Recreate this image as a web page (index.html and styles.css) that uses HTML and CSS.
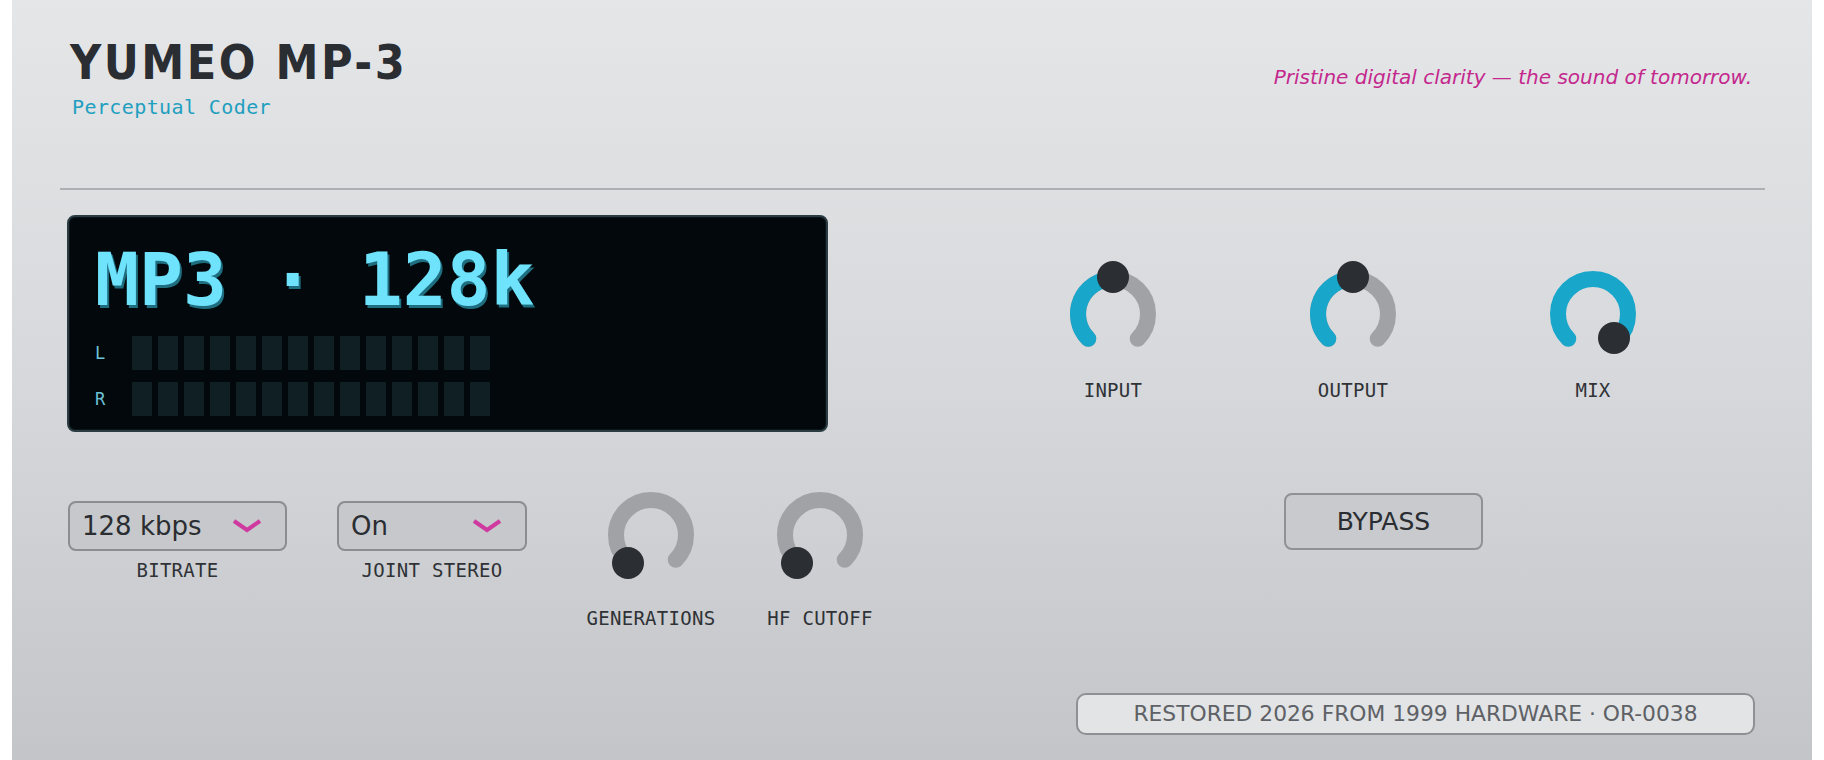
FILE: index.html
```html
<!DOCTYPE html>
<html lang="en">
<head>
    <meta charset="UTF-8">
    <meta name="viewport" content="width=device-width, initial-scale=1.0">
    <title>Yumeo MP-3</title>
    <link rel="stylesheet" href="styles.css">
</head>
<body>
    <div class="panel">
        <header class="header">
            <div class="brand">
                <h1>YUMEO MP-3</h1>
                <p class="subtitle">Perceptual Coder</p>
            </div>
            <p class="tagline">Pristine digital clarity — the sound of tomorrow.</p>
        </header>
        <div class="rule"></div>

        <div class="deck">
            <!-- left side: codec display and encoder settings -->
            <div class="left">
                <div class="display">
                    <div class="readout">MP3 · 128k</div>
                    <div class="meter">
                        <span class="ch">L</span>
                        <div class="segs">
                            <i></i><i></i><i></i><i></i><i></i><i></i><i></i><i></i><i></i><i></i><i></i><i></i><i></i><i></i>
                        </div>
                    </div>
                    <div class="meter">
                        <span class="ch">R</span>
                        <div class="segs">
                            <i></i><i></i><i></i><i></i><i></i><i></i><i></i><i></i><i></i><i></i><i></i><i></i><i></i><i></i>
                        </div>
                    </div>
                </div>

                <div class="controls">
                    <div class="field bitrate">
                        <div class="select">
                            <span>128 kbps</span>
                            <svg class="chev" viewBox="0 0 30 14"><path d="M2 2 L15 11 L28 2"/></svg>
                        </div>
                        <div class="label">BITRATE</div>
                    </div>
                    <div class="field stereo">
                        <div class="select">
                            <span>On</span>
                            <svg class="chev" viewBox="0 0 30 14"><path d="M2 2 L15 11 L28 2"/></svg>
                        </div>
                        <div class="label">JOINT STEREO</div>
                    </div>
                    <div class="knob small gen">
                        <svg viewBox="0 0 100 100">
                            <path class="track" d="M25.25 74.75 A35 35 0 1 1 74.75 74.75"/>
                            <circle class="dot" cx="27" cy="78" r="16"/>
                        </svg>
                        <div class="label">GENERATIONS</div>
                    </div>
                    <div class="knob small hf">
                        <svg viewBox="0 0 100 100">
                            <path class="track" d="M25.25 74.75 A35 35 0 1 1 74.75 74.75"/>
                            <circle class="dot" cx="27" cy="78" r="16"/>
                        </svg>
                        <div class="label">HF CUTOFF</div>
                    </div>
                </div>
            </div>

            <!-- right side: gain staging, bypass, badge -->
            <div class="right">
                <div class="knob-row">
                    <div class="knob">
                        <svg viewBox="0 0 100 100">
                            <path class="track" d="M25.25 74.75 A35 35 0 1 1 74.75 74.75"/>
                            <path class="value" d="M25.25 74.75 A35 35 0 0 1 50 15"/>
                            <circle class="dot" cx="50" cy="13" r="16"/>
                        </svg>
                        <div class="label">INPUT</div>
                    </div>
                    <div class="knob">
                        <svg viewBox="0 0 100 100">
                            <path class="track" d="M25.25 74.75 A35 35 0 1 1 74.75 74.75"/>
                            <path class="value" d="M25.25 74.75 A35 35 0 0 1 50 15"/>
                            <circle class="dot" cx="50" cy="13" r="16"/>
                        </svg>
                        <div class="label">OUTPUT</div>
                    </div>
                    <div class="knob">
                        <svg viewBox="0 0 100 100">
                            <path class="value" d="M25.25 74.75 A35 35 0 1 1 74.75 74.75"/>
                            <circle class="dot" cx="71" cy="74" r="16"/>
                        </svg>
                        <div class="label">MIX</div>
                    </div>
                </div>
                <button class="bypass">BYPASS</button>
                <div class="badge">RESTORED 2026 FROM 1999 HARDWARE · OR-0038</div>
            </div>
        </div>
    </div>
</body>
</html>
```

FILE: styles.css
```css
body { margin: 0; background: #fff; font-family: "DejaVu Sans", sans-serif; }
.panel { margin: 0 12px; min-height: 760px; box-sizing: border-box; padding: 38px 47px 0 48px; background: linear-gradient(to bottom, #e5e6e8 0%, #d6d8db 50%, #c3c5c8 100%); overflow: hidden; }

/* header */
.header { display: flex; justify-content: space-between; align-items: flex-start; padding: 0 13px 0 10px; }
.header h1 { margin: 0; font-family: "DejaVu Sans Condensed", "DejaVu Sans", sans-serif; font-stretch: condensed; font-size: 48px; line-height: 48px; font-weight: bold; letter-spacing: 2.5px; color: #2a2d31; }
.subtitle { margin: 11px 0 0 2px; font-family: "DejaVu Sans Mono", monospace; font-size: 20px; line-height: 20px; letter-spacing: 0.4px; color: #1f9fbf; }
.tagline { margin: 29px 0 0; font-size: 20px; line-height: 20px; font-style: italic; color: #c4288d; }
.rule { height: 2px; background: #adafb2; margin-top: 71px; }

.deck { display: grid; grid-template-columns: 761px 1fr; margin-top: 25px; padding-left: 7px; }

/* codec display */
.display { height: 217px; box-sizing: border-box; border: 2px solid #2a3c42; border-radius: 8px; background: #02080b; padding: 26px 24px 0 26px; box-shadow: inset 0 0 0 1px #0b1519; }
.readout { font-family: "DejaVu Sans Mono", monospace; font-weight: bold; font-size: 73px; line-height: 73px; color: #6fe2fc; text-shadow: 2px 3px 0 #1f6e80; white-space: pre; }
.meter { display: flex; align-items: center; height: 34px; margin-top: 12px; }
.readout + .meter { margin-top: 20px; }
.ch { width: 37px; font-family: "DejaVu Sans Mono", monospace; font-size: 17px; color: #6cc2d8; }
.segs { display: flex; gap: 6px; height: 34px; }
.segs i { width: 20px; height: 34px; background: #0f1f24; }

/* encoder settings */
.controls { display: flex; align-items: flex-start; margin-top: 69px; padding-left: 1px; }
.controls > * { flex-shrink: 0; }
.field { display: flex; flex-direction: column; align-items: stretch; }
.bitrate { width: 219px; }
.stereo { width: 190px; margin-left: 50px; }
.select { height: 50px; box-sizing: border-box; border: 2px solid #8b8d90; border-radius: 8px; background: #c6c8cb; display: flex; align-items: center; justify-content: space-between; padding: 0 23px 0 12px; font-size: 26px; color: #2a2d31; }
.chev { width: 30px; height: 14px; fill: none; stroke: #cf3aa0; stroke-width: 4; }
.label { font-family: "DejaVu Sans Mono", monospace; font-size: 19px; line-height: 22px; letter-spacing: 0.3px; color: #2f3236; text-align: center; }
.field .label { margin-top: 8px; }

/* knobs */
.knob { display: flex; flex-direction: column; align-items: center; width: 240px; }
.knob svg { width: 100px; height: 100px; overflow: visible; }
.knob .track, .knob .value { fill: none; stroke-width: 16; stroke-linecap: round; }
.track { stroke: #a0a2a5; }
.value { stroke: #18a6ca; }
.dot { fill: #2b2e32; }
.knob .label { margin-top: 15px; }
.knob.small { width: 130px; margin-top: -16px; }
.knob.small .label { margin-top: 22px; }
.gen { margin-left: 59px; }
.hf { margin-left: 39px; }

.right { display: flex; flex-direction: column; align-items: flex-start; }
.knob-row { display: flex; margin-top: 49px; padding-left: 165px; }
.bypass { margin: 92px 0 0 456px; width: 199px; height: 57px; box-sizing: border-box; border: 2px solid #8f9194; border-radius: 8px; background: #c8cacd; font-family: inherit; font-size: 25px; color: #2a2d31; padding: 0; }
.badge { margin: 143px 0 0 248px; width: 679px; height: 42px; box-sizing: border-box; border: 2px solid #8e9093; border-radius: 10px; background: #e2e4e6; font-size: 21.8px; line-height: 38px; text-align: center; color: #5e6165; }
```
